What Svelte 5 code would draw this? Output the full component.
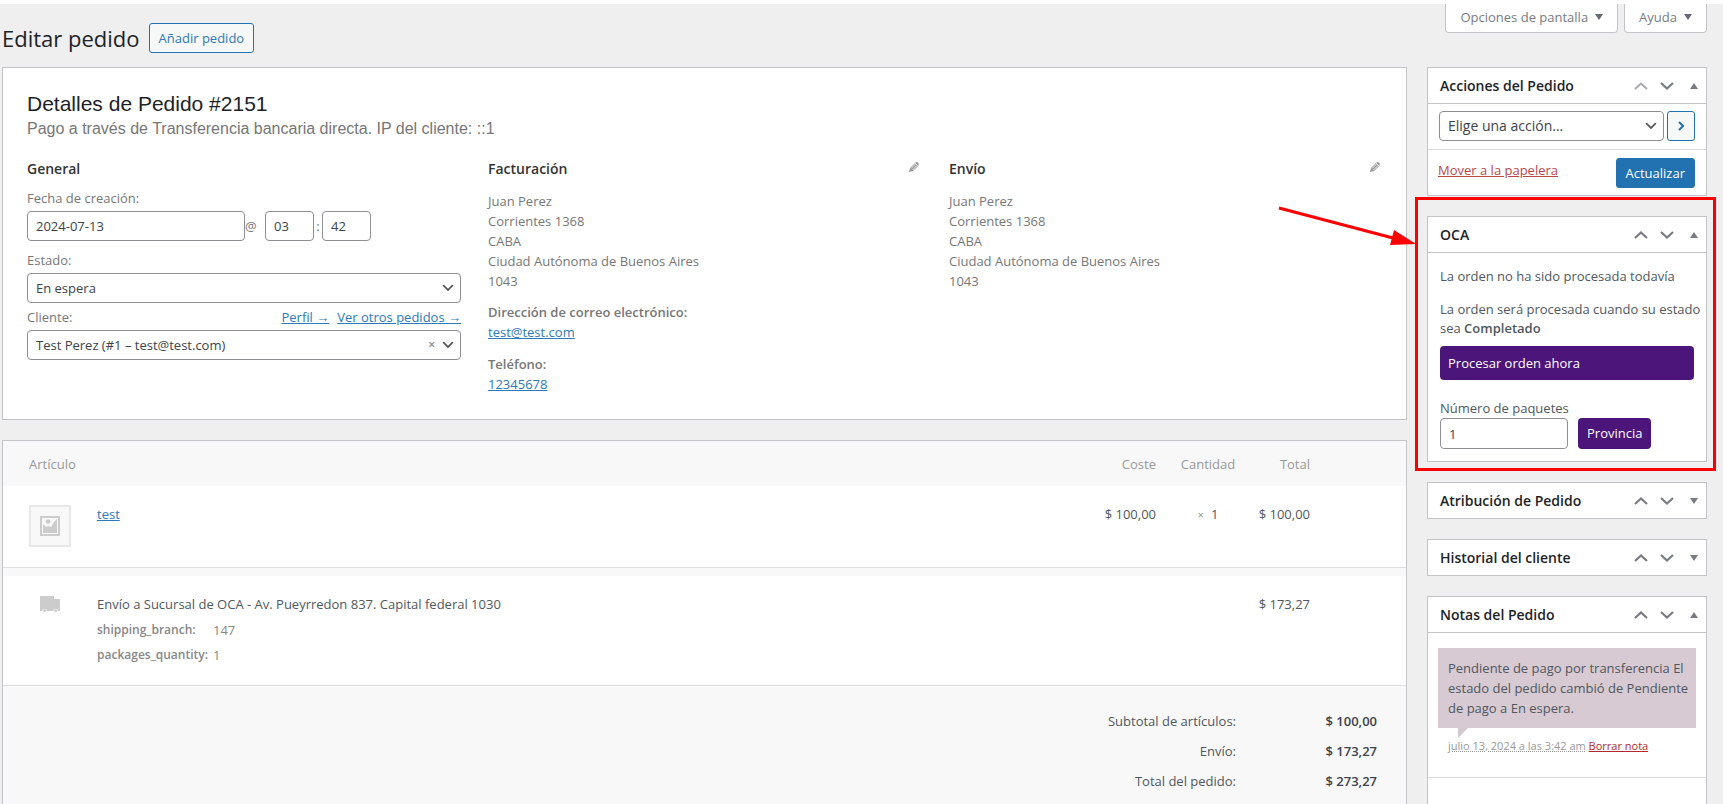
<script>
  let date = $state('2024-07-13')
  let hour = $state('03')
  let minute = $state('42')
  let packages = $state('1')

  let open = $state({ actions: true, oca: true, attribution: false, history: false, notes: true })

  const address = ['Juan Perez', 'Corrientes 1368', 'CABA', 'Ciudad Autónoma de Buenos Aires', '1043']

  const meta = [
    { key: 'shipping_branch:', val: '147' },
    { key: 'packages_quantity:', val: '1' }
  ]

  const totals = [
    { label: 'Subtotal de artículos:', val: '$ 100,00' },
    { label: 'Envío:', val: '$ 173,27' },
    { label: 'Total del pedido:', val: '$ 273,27' }
  ]

  const toggle = id => (open[id] = !open[id])
</script>

{#snippet arrow()}
  <svg class="arrow" viewBox="0 0 20 20" width="16" height="16" aria-hidden="true">
    <path d="M5 6l5 5 5-5 2 1-7 7-7-7 2-1z" fill="#555" />
  </svg>
{/snippet}

{#snippet pencil()}
  <svg viewBox="0 0 12 12" width="12" height="12" aria-hidden="true">
    <path d="M1 11l1-4 5.500-5.500q1.500-1 2.700.300 1.300 1.200.300 2.700L5 10z" fill="#999" />
    <path d="M3 7.500l4.600-4.600M4.500 9L9.100 4.400M7 2l3 3" stroke="#fff" stroke-width=".8" />
  </svg>
{/snippet}

{#snippet boxHeader(id, title, first)}
  <header class="box-header">
    <h2>{title}</h2>
    <div class="handles">
      <button class="handle" class:disabled={first} aria-label="Subir {title}">
        <svg viewBox="0 0 14 8" width="14" height="8"><path d="M1 7l6-5.500L13 7" /></svg>
      </button>
      <button class="handle" aria-label="Bajar {title}">
        <svg viewBox="0 0 14 8" width="14" height="8"><path d="M1 1l6 5.500L13 1" /></svg>
      </button>
      <button class="handle toggle" aria-label="Alternar {title}" onclick={() => toggle(id)}>
        <svg viewBox="0 0 8 6" width="8" height="6">
          <polygon points={open[id] ? '0,6 4,0 8,6' : '0,0 8,0 4,6'} />
        </svg>
      </button>
    </div>
  </header>
{/snippet}

<div class="page">
  <div class="screen-tabs">
    <button class="tab">Opciones de pantalla <svg viewBox="0 0 8 6" width="8" height="6"><polygon points="0,0 8,0 4,6" /></svg></button>
    <button class="tab">Ayuda <svg viewBox="0 0 8 6" width="8" height="6"><polygon points="0,0 8,0 4,6" /></svg></button>
  </div>

  <div class="heading">
    <h1>Editar pedido</h1>
    <a class="btn" href="#nuevo">Añadir pedido</a>
  </div>

  <div class="columns">
    <main class="main">
      <section class="panel order">
        <h2 class="order-title">Detalles de Pedido #2151</h2>
        <p class="order-sub">Pago a través de Transferencia bancaria directa. IP del cliente: ::1</p>

        <div class="order-cols">
          <div class="order-col">
            <h3>General</h3>
            <label class="first" for="date">Fecha de creación:</label>
            <div class="date-row">
              <input id="date" class="date" bind:value={date} />
              <span>@</span>
              <input class="time" aria-label="Hora" bind:value={hour} />
              <span class="colon">:</span>
              <input class="time" aria-label="Minuto" bind:value={minute} />
            </div>
            <label for="status">Estado:</label>
            <div class="select">
              <select id="status"><option>En espera</option></select>
              {@render arrow()}
            </div>
            <div class="customer-row">
              <label for="customer">Cliente:</label>
              <span class="customer-links">
                <a href="#perfil">Perfil →</a>
                <a href="#pedidos">Ver otros pedidos →</a>
              </span>
            </div>
            <div class="select">
              <select id="customer"><option>Test Perez (#1 – test@test.com)</option></select>
              <button class="clear" aria-label="Quitar cliente">×</button>
              {@render arrow()}
            </div>
          </div>

          <div class="order-col">
            <div class="col-head">
              <h3>Facturación</h3>
              <button class="edit" aria-label="Editar facturación">{@render pencil()}</button>
            </div>
            <address>
              {#each address as line}<div>{line}</div>{/each}
            </address>
            <p><strong>Dirección de correo electrónico:</strong><br /><a href="mailto:test@test.com">test@test.com</a></p>
            <p><strong>Teléfono:</strong><br /><a href="tel:12345678">12345678</a></p>
          </div>

          <div class="order-col">
            <div class="col-head">
              <h3>Envío</h3>
              <button class="edit" aria-label="Editar envío">{@render pencil()}</button>
            </div>
            <address>
              {#each address as line}<div>{line}</div>{/each}
            </address>
          </div>
        </div>
      </section>

      <section class="panel items">
        <table class="lines">
          <thead>
            <tr>
              <th class="name" colspan="2">Artículo</th>
              <th class="cost">Coste</th>
              <th class="qty">Cantidad</th>
              <th class="total">Total</th>
              <th class="end"></th>
            </tr>
          </thead>
          <tbody>
            <tr class="item">
              <td class="thumb">
                <div class="thumb-box">
                  <svg viewBox="0 0 20 20" width="20" height="20" aria-hidden="true">
                    <path d="M0 0h20v20H0z" fill="#ccc" />
                    <path d="M2 2h16v16H2z" fill="#f8f8f8" />
                    <path d="M3 17V8l3 3 2-1 3 1 3-5 3-3v14z" fill="#ccc" />
                    <circle cx="8" cy="5.500" r="2.300" fill="#ccc" />
                  </svg>
                </div>
              </td>
              <td><a href="#test">test</a></td>
              <td class="cost">$ 100,00</td>
              <td class="qty"><small>×</small> 1</td>
              <td class="total">$ 100,00</td>
              <td></td>
            </tr>
          </tbody>
          <tbody class="shipping">
            <tr class="spacer"><td colspan="6"></td></tr>
            <tr class="item">
              <td class="thumb">
                <svg class="truck" viewBox="0 0 20 16" width="20" height="16" aria-hidden="true">
                  <path d="M0 0h14v3h6v12h-2a2.300 2.300 0 0 0-4.600 0H7a2.300 2.300 0 0 0-4.600 0H0z" />
                  <circle cx="4.700" cy="14.500" r="1.500" />
                  <circle cx="15.700" cy="14.500" r="1.500" />
                </svg>
              </td>
              <td colspan="3">
                Envío a Sucursal de OCA - Av. Pueyrredon 837. Capital federal 1030
                <dl>
                  {#each meta as m (m.key)}
                    <dt>{m.key}</dt>
                    <dd>{m.val}</dd>
                  {/each}
                </dl>
              </td>
              <td class="total">$ 173,27</td>
              <td></td>
            </tr>
          </tbody>
        </table>

        <table class="totals">
          <tbody>
            {#each totals as t (t.label)}
              <tr>
                <td>{t.label}</td>
                <td class="amount">{t.val}</td>
              </tr>
            {/each}
          </tbody>
        </table>
      </section>
    </main>

    <aside class="side">
      <section class="panel">
        {@render boxHeader('actions', 'Acciones del Pedido', true)}
        {#if open.actions}
          <div class="action-row">
            <div class="select">
              <select aria-label="Acción"><option>Elige una acción…</option></select>
              {@render arrow()}
            </div>
            <button class="btn go" aria-label="Aplicar">
              <svg viewBox="0 0 6 10" width="6" height="10"><path d="M1 1l4 4-4 4" /></svg>
            </button>
          </div>
          <div class="submit-row">
            <a class="delete" href="#papelera">Mover a la papelera</a>
            <button class="btn primary">Actualizar</button>
          </div>
        {/if}
      </section>

      <section class="panel oca">
        {@render boxHeader('oca', 'OCA', false)}
        {#if open.oca}
          <div class="oca-body">
            <p>La orden no ha sido procesada todavía</p>
            <p>La orden será procesada cuando su estado<br />sea <strong>Completado</strong></p>
            <button class="violet wide">Procesar orden ahora</button>
            <label for="packages">Número de paquetes</label>
            <div class="oca-row">
              <input id="packages" bind:value={packages} />
              <button class="violet">Provincia</button>
            </div>
          </div>
        {/if}
        <div class="highlight"></div>
        <svg class="pointer" viewBox="0 0 138 42" width="138" height="42" aria-hidden="true">
          <path d="M1 4l114 30" stroke="#f00" stroke-width="3" />
          <polygon points="116,26 138,40 112,41" fill="#f00" />
        </svg>
      </section>

      <section class="panel">
        {@render boxHeader('attribution', 'Atribución de Pedido', false)}
      </section>

      <section class="panel">
        {@render boxHeader('history', 'Historial del cliente', false)}
      </section>

      <section class="panel notes">
        {@render boxHeader('notes', 'Notas del Pedido', false)}
        {#if open.notes}
          <div class="note">
            <div class="note-text">Pendiente de pago por transferencia El estado del pedido cambió de Pendiente de pago a En espera.</div>
            <p class="note-meta"><abbr title="13/07/24 03:42:00">julio 13, 2024 a las 3:42 am</abbr> <a href="#borrar">Borrar nota</a></p>
          </div>
        {/if}
      </section>
    </aside>
  </div>
</div>

<style>
  :global(body) {
    margin: 0;
    background: #efefef;
    color: #50575e;
    font-family: "Open Sans", "Noto Sans", sans-serif;
    font-size: 13px;
    line-height: 20px;
  }

  h1, h2, h3, p, dl, dd {
    margin: 0;
  }

  * {
    box-sizing: border-box;
  }

  a {
    color: #2e7ab8;
  }

  button, input, select {
    font: inherit;
    color: inherit;
  }

  button {
    cursor: pointer;
  }

  input, select {
    height: 30px;
    padding: 0 8px;
    background: #fff;
    border: 1px solid #8c8f94;
    border-radius: 4px;
    color: #3c434a;
    min-width: 0;
  }

  .page {
    display: flex;
    flex-direction: column;
    min-height: 100vh;
    padding: 0 16px 0 2px;
    border-top: 4px solid #fff;
  }

  .screen-tabs {
    display: flex;
    justify-content: flex-end;
    gap: 6px;
    height: 19px;
  }

  .tab {
    display: flex;
    align-items: center;
    gap: 7px;
    height: 29px;
    padding: 0 14px 2px;
    background: #fff;
    border: 1px solid #c3c4c7;
    border-top: none;
    border-radius: 0 0 4px 4px;
    color: #787c82;
  }

  .tab svg {
    fill: #646970;
  }

  .heading {
    display: flex;
    align-items: center;
    gap: 9px;
    height: 30px;
    margin-bottom: 14px;
  }

  h1 {
    font-size: 22px;
    font-weight: 400;
    line-height: 30px;
    color: #1d2327;
  }

  .btn {
    height: 30px;
    padding: 0 9px;
    line-height: 28px;
    background: #f6f7f7;
    border: 1px solid #2271b1;
    border-radius: 3px;
    color: #2e7ab8;
    text-decoration: none;
  }

  .columns {
    display: flex;
    flex: 1;
    gap: 20px;
  }

  .main {
    display: flex;
    flex: 1;
    flex-direction: column;
    gap: 20px;
    min-width: 0;
  }

  .side {
    display: flex;
    flex: none;
    flex-direction: column;
    gap: 20px;
    width: 280px;
  }

  .panel {
    background: #fff;
    border: 1px solid #c3c4c7;
  }

  /* order details */
  .order {
    padding: 23px 23px 13px 24px;
    color: #777;
  }

  .order-title {
    font-family: "Liberation Sans", Arial, sans-serif;
    font-size: 21px;
    font-weight: 400;
    line-height: 26px;
    color: #1d2327;
  }

  .order-sub {
    font-family: "Liberation Sans", Arial, sans-serif;
    font-size: 16px;
    line-height: 24px;
  }

  .order-cols {
    display: grid;
    grid-template-columns: repeat(3, 1fr);
    gap: 27px;
    padding-top: 18px;
  }

  .order-col {
    display: flex;
    flex-direction: column;
    min-width: 0;
  }

  h3 {
    font-size: 14px;
    font-weight: 600;
    line-height: 20px;
    color: #333;
  }

  .order-col label {
    margin-top: 9px;
    margin-bottom: 3px;
  }

  .date-row {
    display: flex;
    align-items: center;
  }

  .date {
    flex: 0 1 218px;
  }

  .date-row span {
    width: 20px;
  }

  .date-row span.colon {
    width: 8px;
    text-align: center;
  }

  .time {
    width: 49px;
  }

  .select {
    position: relative;
    display: flex;
    flex: 1;
  }

  .order-col .select {
    flex: none;
  }

  .select select {
    width: 100%;
    appearance: none;
  }

  .select .arrow {
    position: absolute;
    right: 5px;
    top: 7px;
    pointer-events: none;
  }

  .clear {
    position: absolute;
    right: 24px;
    top: 5px;
    padding: 0 2px;
    background: none;
    border: none;
    color: #888;
    font-weight: 600;
    font-size: 12px;
  }

  .customer-row {
    display: flex;
    justify-content: space-between;
    align-items: center;
    padding: 4px 0 3px;
  }

  .order-col .customer-row label {
    margin: 0;
  }

  .customer-links {
    display: flex;
    gap: 8px;
  }

  .col-head {
    display: flex;
    justify-content: space-between;
    align-items: center;
  }

  .edit {
    display: flex;
    padding: 0 2px 4px;
    background: none;
    border: none;
  }

  address {
    margin: 12px 0 11px;
    font-style: normal;
  }

  .order-col p {
    margin-bottom: 12px;
  }

  strong {
    font-weight: 600;
  }

  /* order items */
  .items {
    flex: 1;
    background: #f8f8f8;
    border-bottom: none;
  }

  .lines {
    width: 100%;
    border-collapse: collapse;
  }

  .lines th {
    height: 45px;
    padding: 0 13px;
    font-weight: 400;
    text-align: left;
    color: #999;
  }

  .lines td {
    padding: 18px 13px;
    vertical-align: top;
  }

  .lines th.name, .lines td.thumb {
    padding-left: 26px;
  }

  .lines td.thumb {
    width: 94px;
    padding-right: 0;
  }

  .lines td.thumb + td {
    padding-left: 0;
  }

  .lines .cost, .lines .total {
    text-align: right;
    white-space: nowrap;
  }

  .lines .total {
    width: 76px;
    padding-left: 0;
  }

  .lines .qty {
    width: 78px;
    padding-left: 0;
    padding-right: 0;
    text-align: center;
  }

  .lines th.end {
    width: 83px;
    padding: 0;
  }

  .item {
    background: #fff;
    border-bottom: 1px solid #dfdfdf;
  }

  .lines .spacer td {
    height: 8px;
    padding: 0;
  }

  .thumb-box {
    display: flex;
    align-items: center;
    justify-content: center;
    width: 42px;
    height: 42px;
    margin: 1px 0 2px;
    background: #f8f8f8;
    border: 2px solid #e8e8e8;
  }

  .truck {
    display: block;
    margin: 2px 11px;
    fill: #ccc;
  }

  small {
    padding-right: 4px;
    font-size: 11px;
    color: #999;
  }

  dl {
    display: grid;
    grid-template-columns: auto 1fr;
    gap: 5px;
    padding: 6px 0 2px;
    color: #888;
  }

  dt {
    font-size: 12px;
    font-weight: 600;
  }

  .totals {
    margin: 20px 16px 6px auto;
    border-spacing: 0;
  }

  .totals td {
    height: 30px;
    padding: 0 13px;
    text-align: right;
  }

  .totals .amount {
    width: 141px;
    font-weight: 600;
    color: #3c434a;
  }

  /* sidebar boxes */
  .box-header {
    display: flex;
    align-items: center;
    justify-content: space-between;
    height: 35px;
    padding: 0 8px 0 12px;
  }

  .box-header:not(:last-child) {
    height: 36px;
    border-bottom: 1px solid #c3c4c7;
  }

  .box-header h2 {
    font-size: 14px;
    font-weight: 600;
    line-height: 20px;
    color: #1d2327;
  }

  .handles {
    display: flex;
    align-items: center;
    gap: 2px;
  }

  .handle {
    display: flex;
    align-items: center;
    justify-content: center;
    width: 24px;
    height: 24px;
    padding: 0;
    background: none;
    border: none;
  }

  .handle path {
    fill: none;
    stroke: #787c82;
    stroke-width: 2.2;
  }

  .handle.disabled path {
    stroke: #a7aaad;
    stroke-width: 2;
  }

  .handle polygon {
    fill: #787c82;
  }

  .handle.toggle {
    justify-content: flex-end;
    width: 17px;
  }

  .action-row {
    display: flex;
    gap: 3px;
    padding: 7px 11px 8px;
    border-bottom: 1px solid #dcdcde;
  }

  .action-row select {
    font-size: 14px;
  }

  .go {
    display: flex;
    align-items: center;
    justify-content: center;
    width: 28px;
    padding: 0;
  }

  .go path {
    fill: none;
    stroke: #2271b1;
    stroke-width: 2;
  }

  .submit-row {
    display: flex;
    justify-content: space-between;
    padding: 8px 11px 7px 10px;
  }

  .delete {
    line-height: 24px;
    color: #b8474a;
  }

  .primary {
    background: #2271b1;
    color: #fff;
  }

  .oca {
    position: relative;
  }

  .oca-body {
    display: flex;
    flex-direction: column;
    padding: 14px 12px 12px;
    line-height: 19px;
  }

  /* the copy may run a little past the buttons below it */
  .oca-body p {
    margin: 0 -8px 14px 0;
  }

  .oca-body p + p {
    margin-bottom: 8px;
  }

  .violet {
    height: 31px;
    padding: 0 9px;
    background: #4b157a;
    border: none;
    border-radius: 4px;
    color: #fff;
    text-align: left;
  }

  .violet.wide {
    height: 34px;
    margin-bottom: 19px;
    padding: 0 8px;
  }

  .oca-row {
    display: flex;
    gap: 10px;
  }

  .oca-row input {
    width: 128px;
    height: 31px;
  }

  .highlight {
    position: absolute;
    inset: -20px -10px -10px -13px;
    border: 3px solid #f00;
    pointer-events: none;
  }

  .pointer {
    position: absolute;
    top: -13px;
    right: calc(100% + 12px);
    fill: none;
    pointer-events: none;
  }

  .notes {
    flex: 1;
    border-bottom: none;
  }

  .note {
    padding: 15px 10px 21px;
    border-bottom: 1px solid #dcdcde;
  }

  .note-text {
    position: relative;
    padding: 10px 4px 10px 10px;
    background: #d7cad2;
  }

  .note-text::after {
    content: "";
    position: absolute;
    top: 100%;
    left: 20px;
    border-style: solid;
    border-width: 10px 10px 0 0;
    border-color: #d0c9ce transparent;
  }

  .note-meta {
    padding: 8px 10px 0;
    font-size: 11px;
    color: #999;
  }

  .note-meta abbr {
    text-decoration: underline dotted;
  }

  .note-meta a {
    color: #b02a30;
  }
</style>
